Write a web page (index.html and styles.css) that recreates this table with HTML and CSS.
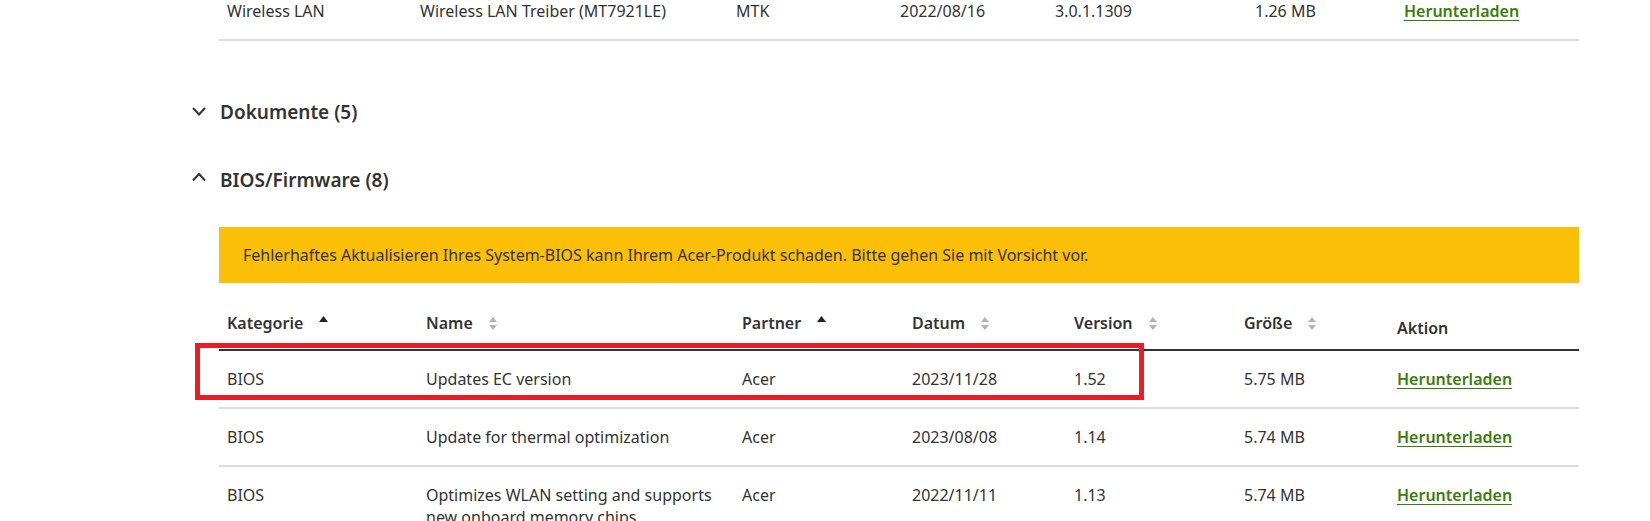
FILE: index.html
```html
<!DOCTYPE html>
<html lang="de">
<head>
<meta charset="utf-8">
<title>Treiber und Handbücher</title>
<link rel="stylesheet" href="styles.css">
</head>
<body>
<div class="page">
  <div class="drivers">
    <table class="dl-table top-table">
      <colgroup>
        <col style="width:193px"><col style="width:316px"><col style="width:164px"><col style="width:155px"><col style="width:200px"><col style="width:149px"><col style="width:183px">
      </colgroup>
      <tbody>
        <tr>
          <td>Wireless LAN</td>
          <td>Wireless LAN Treiber (MT7921LE)</td>
          <td>MTK</td>
          <td>2022/08/16</td>
          <td>3.0.1.1309</td>
          <td>1.26 MB</td>
          <td><a class="dl-link" href="#">Herunterladen</a></td>
        </tr>
      </tbody>
    </table>
  </div>

  <section class="acc acc-first">
    <h3 class="acc-head">
      <svg class="chev" width="14" height="14" viewBox="0 0 14 14"><path d="M1 3 L7 9.5 L13 3" fill="none" stroke="#333" stroke-width="2"/></svg>
      <span>Dokumente (5)</span>
    </h3>
  </section>

  <section class="acc">
    <h3 class="acc-head">
      <svg class="chev" width="14" height="14" viewBox="0 0 14 14"><path d="M1 7.5 L7 1 L13 7.5" fill="none" stroke="#333" stroke-width="2"/></svg>
      <span>BIOS/Firmware (8)</span>
    </h3>
    <div class="acc-body">
      <div class="warn">Fehlerhaftes Aktualisieren Ihres System-BIOS kann Ihrem Acer-Produkt schaden. Bitte gehen Sie mit Vorsicht vor.</div>
      <div class="table-wrap">
        <table class="dl-table">
          <colgroup>
            <col style="width:199px"><col style="width:316px"><col style="width:170px"><col style="width:162px"><col style="width:170px"><col style="width:153px"><col style="width:190px">
          </colgroup>
          <thead>
            <tr>
              <th>Kategorie<span class="sort sort-up"><svg width="9" height="6" viewBox="0 0 9 6"><path d="M4.5 0 L9 6 L0 6 Z" fill="#222"/></svg></span></th>
              <th>Name<span class="sort sort-both"><svg width="8" height="13" viewBox="0 0 8 13"><path d="M4 0 L8 5 L0 5 Z M0 8 L8 8 L4 13 Z" fill="#b3b3b3"/></svg></span></th>
              <th>Partner<span class="sort sort-up"><svg width="9" height="6" viewBox="0 0 9 6"><path d="M4.5 0 L9 6 L0 6 Z" fill="#222"/></svg></span></th>
              <th>Datum<span class="sort sort-both"><svg width="8" height="13" viewBox="0 0 8 13"><path d="M4 0 L8 5 L0 5 Z M0 8 L8 8 L4 13 Z" fill="#b3b3b3"/></svg></span></th>
              <th>Version<span class="sort sort-both"><svg width="8" height="13" viewBox="0 0 8 13"><path d="M4 0 L8 5 L0 5 Z M0 8 L8 8 L4 13 Z" fill="#b3b3b3"/></svg></span></th>
              <th>Größe<span class="sort sort-both"><svg width="8" height="13" viewBox="0 0 8 13"><path d="M4 0 L8 5 L0 5 Z M0 8 L8 8 L4 13 Z" fill="#b3b3b3"/></svg></span></th>
              <th class="plain">Aktion</th>
            </tr>
          </thead>
          <tbody>
            <tr>
              <td>BIOS</td>
              <td>Updates EC version</td>
              <td>Acer</td>
              <td>2023/11/28</td>
              <td>1.52</td>
              <td>5.75 MB</td>
              <td><a class="dl-link" href="#">Herunterladen</a></td>
            </tr>
            <tr>
              <td>BIOS</td>
              <td>Update for thermal optimization</td>
              <td>Acer</td>
              <td>2023/08/08</td>
              <td>1.14</td>
              <td>5.74 MB</td>
              <td><a class="dl-link" href="#">Herunterladen</a></td>
            </tr>
            <tr>
              <td>BIOS</td>
              <td>Optimizes WLAN setting and supports new onboard memory chips</td>
              <td>Acer</td>
              <td>2022/11/11</td>
              <td>1.13</td>
              <td>5.74 MB</td>
              <td><a class="dl-link" href="#">Herunterladen</a></td>
            </tr>
          </tbody>
        </table>
        <div class="highlight"></div>
      </div>
    </div>
  </section>
</div>
</body>
</html>
```

FILE: styles.css
```css
* {
  box-sizing: border-box;
}

body {
  margin: 0;
  background: #fff;
  color: #333;
  font-family: "Noto Sans", "Open Sans", sans-serif;
}

.page {
  display: flex;
  flex-direction: column;
  margin-left: 192px;
  width: 1387px;
}

.drivers {
  margin-top: -17px;
  margin-left: 27px;
}

.dl-table {
  width: 1360px;
  border-collapse: collapse;
  table-layout: fixed;
}

.dl-table td {
  padding: 17px 8px;
  font-size: 16px;
  line-height: 22px;
  border-bottom: 2px solid #dddddd;
  vertical-align: top;
  text-align: left;
  color: #333;
}

.dl-table th {
  padding: 29px 8px 15px;
  font-size: 16px;
  line-height: 22px;
  font-weight: 600;
  border-bottom: 2px solid #333;
  text-align: left;
  vertical-align: top;
  white-space: nowrap;
  color: #333;
}

.dl-table th.plain {
  padding-top: 34px;
  padding-bottom: 10px;
}

.sort {
  display: inline-block;
  margin-left: 16px;
  line-height: 0;
}

.sort-up {
  vertical-align: 7px;
}

.sort-both {
  vertical-align: -1px;
}

.dl-link {
  color: #3b7d0b;
  font-weight: 600;
  text-decoration: underline;
  text-underline-offset: 3px;
}

.acc-first {
  margin-top: 37px;
}

.acc-head {
  display: flex;
  align-items: center;
  gap: 14px;
  margin: 0;
  padding: 20px 0;
  font-size: 19px;
  line-height: 28px;
  font-weight: 600;
  color: #333;
}

.chev {
  flex: none;
  display: block;
}

.acc-body {
  margin-left: 27px;
  padding-top: 13px;
}

.warn {
  height: 56px;
  display: flex;
  align-items: center;
  padding: 0 24px;
  background: #fcbf07;
  font-size: 16px;
  color: #333;
}

.table-wrap {
  position: relative;
}

.highlight {
  position: absolute;
  left: -24px;
  top: 60px;
  width: 949px;
  height: 57px;
  border: 5px solid #ed1c24;
  pointer-events: none;
}
```
